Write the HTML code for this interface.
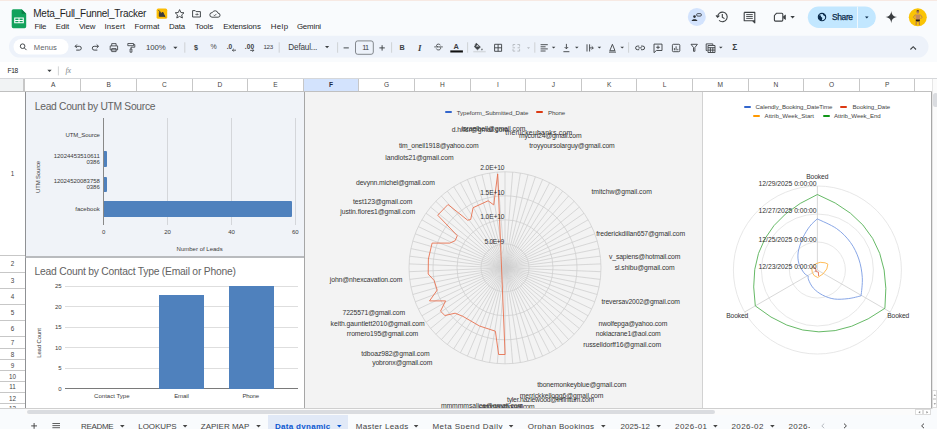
<!DOCTYPE html>
<html><head><meta charset="utf-8"><title>Meta_Full_Funnel_Tracker</title>
<style>
*{box-sizing:border-box;margin:0;padding:0}
html,body{width:937px;height:429px;overflow:hidden;background:#f9fbfd;font-family:"Liberation Sans",sans-serif;color:#1f1f1f}
.abs{position:absolute}
#root{position:relative;width:937px;height:429px;overflow:hidden}
.t{position:absolute;white-space:nowrap;line-height:1}
.menu{font-size:8.2px;color:#1f1f1f;top:22.5px}
.ch{position:absolute;top:79px;height:12.5px;font-size:6.6px;color:#444;text-align:center;line-height:11.6px;border-right:1px solid #c7c7c7;background:#fff}
.rh{position:absolute;left:0;width:25px;font-size:6.3px;color:#444;text-align:center;border-bottom:1px solid #c7c7c7;background:#fff}
.tab{position:absolute;top:420.6px;font-size:8.3px;color:#333;letter-spacing:.35px;white-space:nowrap;line-height:1}
.lb{position:absolute;font-size:7.2px;color:#333;white-space:nowrap;line-height:1;transform:translateY(-50%)}
.ax{position:absolute;font-size:7.4px;color:#333;white-space:nowrap;line-height:1;transform:translateY(-50%)}
.s{position:absolute;font-size:5.6px;color:#444;white-space:nowrap;line-height:1}
svg{position:absolute;left:0;top:0;overflow:visible}
</style></head><body><div id="root">
<!-- top accent line -->
<div class="abs" style="left:0;top:0;width:937px;height:1px;background:#f7e9e3"></div>
<!-- sheets logo -->
<svg width="937" height="62" viewBox="0 0 937 62">
 <path d="M13.300 9.200h8.300l4.600 4.600v12.800a1.600 1.600 0 0 1-1.600 1.600h-11.300a1.600 1.600 0 0 1-1.600-1.600v-15.800a1.600 1.600 0 0 1 1.600-1.600z" fill="#12a25c"/>
 <path d="M21.600 9.200l4.600 4.600h-4.600z" fill="#0b7d45"/>
 <path d="M14.200 17.600h9.600v5.600h-9.600zM15.300 18.600v1.400h3.200v-1.400zM19.500 18.600v1.400h3.200v-1.400zM15.300 20.900v1.300h3.200v-1.300zM19.500 20.900v1.300h3.200v-1.300z" fill="#fff" fill-rule="evenodd"/>
 <!-- yellow badge -->
 <rect x="156.6" y="8.6" width="10.6" height="10.2" rx="1.6" fill="#fbbc04"/>
 <path d="M158.5 10.2l6.8 7M159.4 12.5l2 1.2 1.3-1.6 2 4.2h-5.4z" stroke="#3c3c3c" stroke-width="1" fill="#3c3c3c"/>
 <!-- star -->
 <path d="M179.6 9.6l1.3 2.9 3.1.3-2.3 2.1.7 3.1-2.8-1.6-2.8 1.6.7-3.1-2.3-2.1 3.1-.3z" fill="none" stroke="#3c4043" stroke-width="0.95" stroke-linejoin="round"/>
 <!-- folder move -->
 <path d="M192.6 10.6h2.6l.9 1h4.3v5.4h-7.8z" fill="none" stroke="#3c4043" stroke-width="0.95" stroke-linejoin="round"/>
 <path d="M195.4 14.4h2.6m-.9-1l1 1-1 1" fill="none" stroke="#3c4043" stroke-width="0.8"/>
 <!-- cloud -->
 <path d="M212 17.2a2.3 2.3 0 0 1 .3-4.6 3 3 0 0 1 5.7.6 2 2 0 0 1 .1 4z" fill="none" stroke="#3c4043" stroke-width="0.95" stroke-linejoin="round"/>
 <path d="M213.6 14.8l1 1 1.8-1.9" fill="none" stroke="#3c4043" stroke-width="0.8"/>
 <!-- toolbar pill -->
 <rect x="9" y="35.8" width="919.5" height="21.8" rx="10.9" fill="#edf2fa"/>
 <rect x="13.5" y="39" width="55" height="15.4" rx="7.7" fill="#fff"/>
 <!-- search -->
 <circle cx="22.6" cy="46.2" r="2.3" fill="none" stroke="#3c4043" stroke-width="0.95"/><path d="M24.3 47.9l2.2 2.2" stroke="#3c4043" stroke-width="0.95"/>
 <g transform="translate(0,0.7)">
 <!-- undo / redo -->
 <path d="M75.2 45.6h4.2a1.9 1.9 0 0 1 0 3.8h-3.2M76.9 43.8l-1.8 1.8 1.8 1.8" fill="none" stroke="#3c4043" stroke-width="0.95"/>
 <path d="M98.4 45.6h-4.2a1.9 1.9 0 0 0 0 3.8h3.2M96.7 43.8l1.8 1.8-1.8 1.8" fill="none" stroke="#3c4043" stroke-width="0.95"/>
 <!-- print -->
 <path d="M110.2 45.2h7.4v4h-7.4zM111.7 45.2v-2.300h4.400v2.300M111.700 47.900h4.400v3h-4.400z" fill="none" stroke="#3c4043" stroke-width="0.85"/>
 <!-- paint format -->
 <path d="M127.800 42.800h5.800v2.200h-5.800zM133.600 43.900h1.200v2.600h-3.800v1.800M130.100 48.300h1.800v3.200h-1.800z" fill="none" stroke="#3c4043" stroke-width="0.85"/>
 <path d="M173.300 46l2.100 2.300 2.100-2.300z" fill="#3c4043"/>
 <path d="M184.8 41.6v10.4" stroke="#c7c9cc" stroke-width="0.8"/>
 <!-- decimals arrows -->
 <path d="M236 49.500h-3.600m1.400-1.400l-1.400 1.400 1.400 1.400" fill="none" stroke="#3c4043" stroke-width="0.850"/>
 <path d="M250.200 49.700h3.600m-1.400-1.400l1.400 1.400-1.400 1.400" fill="none" stroke="#3c4043" stroke-width="0.850"/>
 <path d="M279.2 41.6v10.4" stroke="#c7c9cc" stroke-width="0.8"/>
 <path d="M325 45.200l2.100 2.300 2.100-2.300z" fill="#3c4043"/>
 <path d="M337.6 41.6v10.4" stroke="#c7c9cc" stroke-width="0.8"/>
 <path d="M343.6 47.2h5.2" stroke="#3c4043" stroke-width="0.95"/>
 <rect x="355.500" y="40.200" width="17.800" height="13.400" rx="2.200" fill="#edf2fa" stroke="#5f6368" stroke-width="0.750"/>
 <path d="M379.4 47.2h5.4M382.1 44.5v5.4" stroke="#3c4043" stroke-width="0.95"/>
 <path d="M391.6 41.6v10.4" stroke="#c7c9cc" stroke-width="0.8"/>
 <!-- strike -->
 <path d="M434.200 46.200h8.600" stroke="#3c4043" stroke-width="0.800"/>
 <path d="M440.400 44.600c-.400-1.700-3.900-1.600-3.900.200 0 .700.600 1.100 1.400 1.400M436.300 47.900c.500 1.900 4.400 1.700 4.300-.300 0-.500-.300-.900-.700-1.100" fill="none" stroke="#3c4043" stroke-width="0.850"/>
 <!-- text color underline -->
 <rect x="450.300" y="49.700" width="12.600" height="2.100" fill="#111"/>
 <path d="M467.6 41.6v10.4" stroke="#c7c9cc" stroke-width="0.8"/>
 <!-- fill bucket -->
 <path d="M476.400 42.600l4 3.800-2.900 2.700-3.100-3zM475 43.800l1.200-1.200" fill="#3c4043" stroke="#3c4043" stroke-width="0.600" stroke-linejoin="round"/>
 <path d="M475.600 45.800l1.700-1.600 1.800 1.700z" fill="#edf2fa"/>
 <path d="M482 47.600c-.700 1-1 1.500-.100 2.100 1-.600.700-1.100.100-2.100z" fill="#3c4043"/>
 <rect x="473.300" y="50.200" width="12.400" height="1.500" fill="#d5d9de"/>
 <!-- borders -->
 <path d="M494.6 43.6h7v7h-7zM498.1 43.600v7M494.6 47.1h7" fill="none" stroke="#3c4043" stroke-width="0.9"/>
 <!-- merge (disabled) -->
 <path d="M513 43.800h2.200M517.400 43.800h2.200M513 50.400h2.200M517.400 50.400h2.200M512.600 47.100h2.400M517.600 47.100h2.400M513 43.800v2M519.600 43.800v2M513 48.400v2M519.600 48.400v2" stroke="#b6bac0" stroke-width="0.9" fill="none"/>
 <path d="M527 46.600l1.500 1.600 1.500-1.600z" fill="#b6bac0"/>
 <path d="M534.800 41.600v10.400" stroke="#c7c9cc" stroke-width="0.8"/>
 <!-- align -->
 <path d="M540.600 44h7.200M540.600 46.100h5M540.600 48.200h7.200M540.600 50.300h5" stroke="#3c4043" stroke-width="0.9"/>
 <path d="M551.800 46l1.800 1.900 1.800-1.900z" fill="#3c4043"/>
 <!-- valign -->
 <path d="M566.400 43.200v4.800m-1.800-1.700l1.800 1.800 1.800-1.800M563.400 51h6" fill="none" stroke="#3c4043" stroke-width="0.9"/>
 <path d="M575 46l1.800 1.900 1.800-1.900z" fill="#3c4043"/>
 <!-- wrap -->
 <path d="M587 43.600v7.200M589.600 47.200h3.600m-1.500-1.600l1.600 1.600-1.600 1.600M589.600 43.600v7.200" fill="none" stroke="#3c4043" stroke-width="0.9"/>
 <path d="M597.600 46l1.800 1.900 1.800-1.900z" fill="#3c4043"/>
 <!-- rotate -->
 <path d="M609.800 50l2.600-6.400 2.600 6.400zM609 51.400h7" fill="none" stroke="#3c4043" stroke-width="0.9"/>
 <path d="M620.400 46l1.800 1.900 1.800-1.900z" fill="#3c4043"/>
 <path d="M628.600 41.600v10.400" stroke="#c7c9cc" stroke-width="0.8"/>
 <!-- link -->
 <path d="M639.200 45.400h-1.800a1.800 1.800 0 0 0 0 3.600h1.800M641 45.400h1.800a1.800 1.800 0 0 1 0 3.600h-1.800M638.400 47.200h3.400" fill="none" stroke="#3c4043" stroke-width="0.95"/>
 <!-- comment+ -->
 <path d="M654 43.400h8v6.400h-5.600l-2.400 2.200zM658 44.800v3.600M656.200 46.600h3.600" fill="none" stroke="#3c4043" stroke-width="0.9"/>
 <!-- chart -->
 <rect x="672.400" y="43.600" width="7.400" height="7.400" rx="1" fill="none" stroke="#3c4043" stroke-width="0.9"/>
 <path d="M674.400 49.600v-2.200M676.100 49.600v-4M677.800 49.600v-1.400" stroke="#3c4043" stroke-width="0.9"/>
 <!-- filter -->
 <path d="M691 43.600h6.400l-2.500 3.200v3.800h-1.400v-3.800z" fill="none" stroke="#3c4043" stroke-width="0.9"/>
 <!-- table views -->
 <path d="M707.400 49.800h-1.200v-6.600h6.600v1.200" fill="none" stroke="#3c4043" stroke-width="0.9"/>
 <path d="M708 44.800h7v7h-7zM708 47h7M710.400 47v4.800M712.800 47v4.800M708 49.400h7" fill="none" stroke="#3c4043" stroke-width="0.9"/>
 <path d="M719 46l1.800 1.900 1.800-1.900z" fill="#3c4043"/>
 <!-- caret up -->
 <path d="M910.400 48.800l2.800-2.800 2.800 2.800" fill="none" stroke="#3c4043" stroke-width="1.1"/>
 </g>
 <!-- top right icons -->
 <circle cx="696.800" cy="16.900" r="9" fill="#d3e3fd"/>
 <circle cx="694.500" cy="16.600" r="1.300" fill="#2b2f33"/><path d="M691.600 21c0-2.200 5.800-2.200 5.800 0z" fill="#2b2f33"/>
 <path d="M693 14.400v2.400M691.800 15.600h2.400" stroke="#2b2f33" stroke-width="0" />
 <rect x="696.600" y="13.600" width="4.800" height="2.500" rx="1.200" fill="none" stroke="#2b2f33" stroke-width="0.800"/>
 <!-- history -->
 <path d="M717.600 16.900a4.800 4.800 0 1 1 1.500 3.500M716 15.400l1.600 1.800 1.800-1.600" fill="none" stroke="#3c4043" stroke-width="1.100"/>
 <path d="M722.300 13.900v3.200l2.200 1.500" fill="none" stroke="#3c4043" stroke-width="1.100"/>
 <!-- comment -->
 <path d="M744.200 12.400h10.600v8.400h-2.200l2.200 2v-2M744.200 12.400v8.400h8.400" fill="none" stroke="#3c4043" stroke-width="1.100" stroke-linejoin="round"/>
 <path d="M746.200 14.600h6.600M746.200 16.500h6.600M746.200 18.400h6.600" stroke="#3c4043" stroke-width="0.900"/>
 <!-- video -->
 <path d="M776.400 13.300h5.400a1 1 0 0 1 1 1v5.800a1 1 0 0 1-1 1h-6.400a1 1 0 0 1-1-1v-4.600z" fill="none" stroke="#3c4043" stroke-width="1.100" stroke-linejoin="round"/>
 <path d="M783.200 16.200l2.600-1.800v5.600l-2.600-1.800z" fill="#3c4043"/>
 <path d="M790.400 16l2.200 2.400 2.200-2.400z" fill="#3c4043"/>
 <!-- share -->
 <rect x="807.800" y="6.600" width="68" height="21.400" rx="10.700" fill="#c2e7ff"/>
 <path d="M857.500 6.600v21.400" stroke="#f9fbfd" stroke-width="0.800"/>
 <circle cx="822" cy="17.100" r="3.700" fill="none" stroke="#0a2a4a" stroke-width="1.100"/>
 <path d="M819 15.400c1.200-.300 2 .200 2 1.100 0 .800 1.300.600 1.300 1.600 0 .800-.500 1.300-.300 2.400-1.800.300-3.600-1.400-3.600-3.400 0-.700.200-1.200.600-1.700zM823.200 13.800c-.500.700-.300 1.500.600 1.600.800.100 1.200.700 1.300 1.500l.600-.400c-.200-1.300-1.200-2.300-2.500-2.700z" fill="#0a2a4a"/>
 <path d="M865 16.600l1.800 1.900 1.800-1.900z" fill="#0a2a4a"/>
 <!-- gemini spark -->
 <path d="M891.300 11c.5 4 2 5.500 5.800 6.100-3.800.600-5.300 2.100-5.800 6.100-.5-4-2-5.500-5.800-6.100 3.800-.600 5.300-2.100 5.800-6.100z" fill="#3a3d40"/>
 <!-- avatar -->
 <circle cx="917.800" cy="17.300" r="9" fill="#fac405"/>
 <ellipse cx="917.800" cy="12.100" rx="1.400" ry="1.700" fill="#b9805a"/>
 <path d="M916.400 11.200c.2-1.400 2.600-1.400 2.800 0z" fill="#3a2a20"/>
 <path d="M915.300 14.400h5l-.5 5.300h-4z" fill="#c58b60"/>
 <path d="M915.300 14.600l-1.900 2.600 1.700 1.800M920.300 14.600l1.900 2.600-1.700 1.800" fill="none" stroke="#b97f55" stroke-width="0.900"/>
 <path d="M915.700 19.400h4.200l-.2 2.200h-3.800z" fill="#1f1a18"/>
 <path d="M916.300 21.500l-.2 3.600M919.300 21.500l.2 3.600" stroke="#b47a50" stroke-width="1.200"/>
</svg>
<div class="t" style="left:33.3px;top:14.0px;font-size:10px;color:#1f1f1f;letter-spacing:-0.268px;transform:translateY(-50%);">Meta_Full_Funnel_Tracker</div>
<div class="t" style="left:34.6px;top:27.0px;font-size:7.9px;color:#1f1f1f;letter-spacing:-0.308px;transform:translateY(-50%);">File</div>
<div class="t" style="left:55.8px;top:27.0px;font-size:7.9px;color:#1f1f1f;letter-spacing:-0.053px;transform:translateY(-50%);">Edit</div>
<div class="t" style="left:78.9px;top:27.0px;font-size:7.9px;color:#1f1f1f;letter-spacing:-0.145px;transform:translateY(-50%);">View</div>
<div class="t" style="left:104.5px;top:27.0px;font-size:7.9px;color:#1f1f1f;letter-spacing:0.124px;transform:translateY(-50%);">Insert</div>
<div class="t" style="left:134.5px;top:27.0px;font-size:7.9px;color:#1f1f1f;letter-spacing:0.013px;transform:translateY(-50%);">Format</div>
<div class="t" style="left:169.0px;top:27.0px;font-size:7.9px;color:#1f1f1f;letter-spacing:-0.172px;transform:translateY(-50%);">Data</div>
<div class="t" style="left:195.0px;top:27.0px;font-size:7.9px;color:#1f1f1f;letter-spacing:-0.069px;transform:translateY(-50%);">Tools</div>
<div class="t" style="left:223.2px;top:27.0px;font-size:7.9px;color:#1f1f1f;letter-spacing:-0.104px;transform:translateY(-50%);">Extensions</div>
<div class="t" style="left:270.8px;top:27.0px;font-size:7.9px;color:#1f1f1f;letter-spacing:0.338px;transform:translateY(-50%);">Help</div>
<div class="t" style="left:296.9px;top:27.0px;font-size:7.9px;color:#1f1f1f;letter-spacing:-0.154px;transform:translateY(-50%);">Gemini</div>
<div class="t" style="left:33.8px;top:48.0px;font-size:7.6px;color:#5f6368;letter-spacing:0.058px;transform:translateY(-50%);">Menus</div>
<div class="t" style="left:146.0px;top:48.0px;font-size:7.8px;color:#3c4043;letter-spacing:-0.062px;transform:translateY(-50%);">100%</div>
<div class="t" style="left:193.9px;top:48.0px;font-size:7.2px;color:#3c4043;letter-spacing:0.296px;transform:translateY(-50%);font-weight:bold;">$</div>
<div class="t" style="left:210.6px;top:46.0px;font-size:7px;color:#444;letter-spacing:0.176px;transform:translateY(-50%);">%</div>
<div class="t" style="left:226.8px;top:47.0px;font-size:6.6px;color:#3c4043;letter-spacing:-0.152px;transform:translateY(-50%);font-weight:bold;">.0</div>
<div class="t" style="left:244.8px;top:47.0px;font-size:6.6px;color:#3c4043;letter-spacing:0.075px;transform:translateY(-50%);font-weight:bold;">.00</div>
<div class="t" style="left:263.4px;top:47.0px;font-size:6.2px;color:#3c4043;letter-spacing:-0.248px;transform:translateY(-50%);">123</div>
<div class="t" style="left:288.3px;top:48.0px;font-size:8.2px;color:#3c4043;letter-spacing:-0.182px;transform:translateY(-50%);">Defaul...</div>
<div class="t" style="left:362.2px;top:48.0px;font-size:7.4px;color:#3c4043;letter-spacing:-0.841px;transform:translateY(-50%);">11</div>
<div class="t" style="left:399.6px;top:48.0px;font-size:7.2px;color:#3c4043;letter-spacing:-0.200px;transform:translateY(-50%);font-weight:bold;">B</div>
<div class="t" style="left:418px;top:48.300px;font-size:8.800px;color:#3c4043;font-style:italic;font-weight:bold;font-family:'Liberation Serif',serif;transform:translateY(-50%)">I</div>
<div class="t" style="left:453.6px;top:47.0px;font-size:7.4px;color:#3c4043;letter-spacing:0.256px;transform:translateY(-50%);font-weight:bold;">A</div>
<div class="t" style="left:732.3px;top:47.0px;font-size:8.4px;color:#3c4043;letter-spacing:-4.153px;transform:translateY(-50%);font-weight:bold;">&Sigma;</div>
<div class="t" style="left:831.9px;top:17.0px;font-size:8.4px;color:#0a2a4a;letter-spacing:-0.303px;transform:translateY(-50%);-webkit-text-stroke:0.25px #0a2a4a;">Share</div>
<div class="abs" style="left:0;top:62px;width:937px;height:16.8px;background:#fff;border-bottom:1px solid #d5d7da"></div>
<div class="t" style="left:7.6px;top:71.0px;font-size:6.6px;color:#222;letter-spacing:-0.391px;transform:translateY(-50%);">F18</div>
<svg width="937" height="80"><path d="M47.300 69.800l2.200 2.300 2.200-2.300z" fill="#3c4043"/><path d="M58.400 66.400v9" stroke="#c7c9cc" stroke-width="0.8"/></svg>
<div class="t" style="left:65.4px;top:71.4px;font-size:8px;color:#80868b;font-style:italic;font-family:'Liberation Serif',serif;transform:translateY(-50%)">fx</div><div class="abs" style="left:0;top:79px;width:937px;height:330px;background:#fff"></div>
<div class="abs" style="left:0;top:79px;width:25px;height:12.5px;background:#f1f3f4;border-right:2px solid #c7c7c7;border-bottom:1px solid #c7c7c7"></div>
<div class="ch" style="left:25.8px;width:55.6px;">A</div>
<div class="ch" style="left:81.4px;width:55.6px;">B</div>
<div class="ch" style="left:137.0px;width:55.6px;">C</div>
<div class="ch" style="left:192.6px;width:55.6px;">D</div>
<div class="ch" style="left:248.2px;width:55.6px;">E</div>
<div class="ch" style="left:303.8px;width:55.6px;background:#d3e3fd;color:#1f2a44;font-weight:bold;">F</div>
<div class="ch" style="left:359.4px;width:55.6px;">G</div>
<div class="ch" style="left:415.0px;width:55.6px;">H</div>
<div class="ch" style="left:470.6px;width:55.6px;">I</div>
<div class="ch" style="left:526.2px;width:55.6px;">J</div>
<div class="ch" style="left:581.8px;width:55.6px;">K</div>
<div class="ch" style="left:637.4px;width:55.6px;">L</div>
<div class="ch" style="left:693.0px;width:55.6px;">M</div>
<div class="ch" style="left:748.6px;width:55.6px;">N</div>
<div class="ch" style="left:804.2px;width:55.6px;">O</div>
<div class="ch" style="left:859.8px;width:55.6px;">P</div>
<div class="ch" style="left:915.4px;width:16.6px;border-right:none"></div>
<div class="abs" style="left:0;top:91.2px;width:932px;height:1px;background:#c0c0c0"></div>
<div class="rh" style="top:92.0px;height:164.2px;line-height:164.2px">1</div>
<div class="rh" style="top:256.2px;height:16.4px;line-height:16.4px">2</div>
<div class="rh" style="top:272.6px;height:16.2px;line-height:16.2px">3</div>
<div class="rh" style="top:288.8px;height:16.2px;line-height:16.2px">4</div>
<div class="rh" style="top:305.0px;height:16.1px;line-height:16.1px">5</div>
<div class="rh" style="top:321.1px;height:16.1px;line-height:16.1px">6</div>
<div class="rh" style="top:337.2px;height:11.4px;line-height:11.4px">7</div>
<div class="rh" style="top:348.6px;height:11.2px;line-height:11.2px">8</div>
<div class="rh" style="top:359.8px;height:11.2px;line-height:11.2px">9</div>
<div class="rh" style="top:371.0px;height:11.1px;line-height:11.1px">10</div>
<div class="rh" style="top:382.1px;height:10.8px;line-height:10.8px">11</div>
<div class="rh" style="top:392.9px;height:11.1px;line-height:11.1px">12</div>
<div class="rh" style="top:404.0px;height:10.6px;line-height:10.6px">13</div>
<div class="abs" style="left:24.6px;top:92px;width:1px;height:317px;background:#c7c7c7"></div>
<div class="abs" style="left:932px;top:79px;width:5px;height:330px;background:#fbfbfb;border-left:1px solid #e6e6e6"></div>
<div class="abs" style="left:933px;top:93.2px;width:5px;height:13.4px;background:#dadce0;border-radius:2.5px"></div><div class="abs" style="left:25.4px;top:92.4px;width:279.6px;height:164.4px;background:#f0f3f8;border:1px solid #8f9194;border-top:none;border-right:none;border-bottom-color:#b9bbbe"></div>
<div class="t" style="left:34.8px;top:107.0px;font-size:10.3px;color:#626262;letter-spacing:-0.303px;transform:translateY(-50%);">Lead Count by UTM Source</div>
<div class="abs" style="left:167.0px;top:117.6px;width:1px;height:107.2px;background:#d4d6da"></div>
<div class="abs" style="left:230.9px;top:117.6px;width:1px;height:107.2px;background:#d4d6da"></div>
<div class="abs" style="left:294.8px;top:117.6px;width:1px;height:107.2px;background:#d4d6da"></div>
<div class="abs" style="left:103.1px;top:117.6px;width:1px;height:107.2px;background:#888"></div>
<div class="abs" style="left:103.6px;top:151.3px;width:3.0px;height:15.5px;background:#4f81bd;border-radius:0 1px 1px 0"></div>
<div class="abs" style="left:103.6px;top:176.5px;width:3.0px;height:15.9px;background:#4f81bd;border-radius:0 1px 1px 0"></div>
<div class="abs" style="left:103.6px;top:201.2px;width:188.8px;height:16.0px;background:#4f81bd;border-radius:0 1px 1px 0"></div>
<div class="t" style="left:65.4px;top:135.0px;font-size:6px;color:#3a3a3a;letter-spacing:-0.095px;transform:translateY(-50%);">UTM_Source</div>
<div class="t" style="left:53.7px;top:156.0px;font-size:6px;color:#3a3a3a;letter-spacing:-0.012px;transform:translateY(-50%);">12024453510611</div>
<div class="t" style="left:86.4px;top:162.0px;font-size:6px;color:#3a3a3a;letter-spacing:0.013px;transform:translateY(-50%);">0386</div>
<div class="t" style="left:53.7px;top:181.0px;font-size:6px;color:#3a3a3a;letter-spacing:-0.044px;transform:translateY(-50%);">12024520083758</div>
<div class="t" style="left:86.4px;top:187.0px;font-size:6px;color:#3a3a3a;letter-spacing:0.013px;transform:translateY(-50%);">0386</div>
<div class="t" style="left:75.2px;top:209.0px;font-size:6px;color:#3a3a3a;letter-spacing:0.031px;transform:translateY(-50%);">facebook</div>
<div class="t" style="left:102.0px;top:232.0px;font-size:6px;color:#3a3a3a;letter-spacing:-0.137px;transform:translateY(-50%);">0</div>
<div class="t" style="left:164.3px;top:232.0px;font-size:6px;color:#3a3a3a;letter-spacing:-0.137px;transform:translateY(-50%);">20</div>
<div class="t" style="left:228.2px;top:232.0px;font-size:6px;color:#3a3a3a;letter-spacing:-0.137px;transform:translateY(-50%);">40</div>
<div class="t" style="left:292.1px;top:232.0px;font-size:6px;color:#3a3a3a;letter-spacing:-0.137px;transform:translateY(-50%);">60</div>
<div class="t" style="left:176.6px;top:249.0px;font-size:6px;color:#3a3a3a;letter-spacing:0.005px;transform:translateY(-50%);">Number of Leads</div>
<div class="abs" style="left:37.7px;top:176.9px;width:0;height:0;transform:rotate(-90deg)"><div class="t" style="left:-16.0px;top:0.0px;font-size:6px;color:#3a3a3a;letter-spacing:-0.167px;transform:translateY(-50%);">UTM Source</div></div><div class="abs" style="left:25.4px;top:256.8px;width:279.6px;height:152px;background:#fff;border-left:1px solid #8f9194;border-top:1px solid #b9bbbe"></div>
<div class="t" style="left:34.6px;top:272.0px;font-size:10.3px;color:#626262;letter-spacing:-0.219px;transform:translateY(-50%);">Lead Count by Contact Type (Email or Phone)</div>
<div class="abs" style="left:64.7px;top:367.9px;width:233.6px;height:1px;background:#dedede"></div>
<div class="abs" style="left:64.7px;top:347.4px;width:233.6px;height:1px;background:#dedede"></div>
<div class="abs" style="left:64.7px;top:326.9px;width:233.6px;height:1px;background:#dedede"></div>
<div class="abs" style="left:64.7px;top:306.4px;width:233.6px;height:1px;background:#dedede"></div>
<div class="abs" style="left:64.7px;top:285.9px;width:233.6px;height:1px;background:#dedede"></div>
<div class="abs" style="left:64.7px;top:388.4px;width:233.6px;height:1px;background:#7a7a7a"></div>
<div class="t" style="left:58.2px;top:389.0px;font-size:6px;color:#3a3a3a;letter-spacing:-0.137px;transform:translateY(-50%);">0</div>
<div class="t" style="left:58.2px;top:368.0px;font-size:6px;color:#3a3a3a;letter-spacing:-0.137px;transform:translateY(-50%);">5</div>
<div class="t" style="left:55.0px;top:348.0px;font-size:6px;color:#3a3a3a;letter-spacing:-0.137px;transform:translateY(-50%);">10</div>
<div class="t" style="left:55.0px;top:327.0px;font-size:6px;color:#3a3a3a;letter-spacing:-0.137px;transform:translateY(-50%);">15</div>
<div class="t" style="left:55.0px;top:307.0px;font-size:6px;color:#3a3a3a;letter-spacing:-0.137px;transform:translateY(-50%);">20</div>
<div class="t" style="left:55.0px;top:286.0px;font-size:6px;color:#3a3a3a;letter-spacing:-0.137px;transform:translateY(-50%);">25</div>
<div class="abs" style="left:159.4px;top:294.6px;width:45.0px;height:94.3px;background:#4f81bd"></div>
<div class="abs" style="left:228.6px;top:286.4px;width:45.1px;height:102.5px;background:#4f81bd"></div>
<div class="t" style="left:94.1px;top:396.0px;font-size:6px;color:#3a3a3a;letter-spacing:0.013px;transform:translateY(-50%);">Contact Type</div>
<div class="t" style="left:174.2px;top:396.0px;font-size:6px;color:#3a3a3a;letter-spacing:-0.081px;transform:translateY(-50%);">Email</div>
<div class="t" style="left:242.4px;top:396.0px;font-size:6px;color:#3a3a3a;letter-spacing:-0.150px;transform:translateY(-50%);">Phone</div>
<div class="abs" style="left:38.6px;top:342.6px;width:0;height:0;transform:rotate(-90deg)"><div class="t" style="left:-14.8px;top:0.0px;font-size:6px;color:#3a3a3a;letter-spacing:-0.143px;transform:translateY(-50%);">Lead Count</div></div><div class="abs" style="left:304px;top:92.2px;width:398.6px;height:316.4px;background:#f3f3f3;border-left:1.2px solid #a6a6a6;border-right:1.4px solid #d2d2d2"></div>
<svg width="937" height="429"><g fill="none" stroke="#cfcfcf" stroke-width="0.8"><path d="M505.0 267.8L505.0 171.8M505.0 267.8L512.7 172.1M505.0 267.8L520.4 173.0M505.0 267.8L528.0 174.6M505.0 267.8L535.4 176.7M505.0 267.8L542.6 179.5M505.0 267.8L549.6 182.8M505.0 267.8L556.3 186.7M505.0 267.8L562.7 191.1M505.0 267.8L568.7 195.9M505.0 267.8L574.2 201.3M505.0 267.8L579.4 207.1M505.0 267.8L584.0 213.3M505.0 267.8L588.1 219.8M505.0 267.8L591.7 226.6M505.0 267.8L594.8 233.8M505.0 267.8L597.2 241.1M505.0 267.8L599.1 248.6M505.0 267.8L600.3 256.2M505.0 267.8L600.9 263.9M505.0 267.8L600.9 271.7M505.0 267.8L600.3 279.4M505.0 267.8L599.1 287.0M505.0 267.8L597.2 294.5M505.0 267.8L594.8 301.8M505.0 267.8L591.7 309.0M505.0 267.8L588.1 315.8M505.0 267.8L584.0 322.3M505.0 267.8L579.4 328.5M505.0 267.8L574.2 334.3M505.0 267.8L568.7 339.7M505.0 267.8L562.7 344.5M505.0 267.8L556.3 348.9M505.0 267.8L549.6 352.8M505.0 267.8L542.6 356.1M505.0 267.8L535.4 358.9M505.0 267.8L528.0 361.0M505.0 267.8L520.4 362.6M505.0 267.8L512.7 363.5M505.0 267.8L505.0 363.8M505.0 267.8L497.3 363.5M505.0 267.8L489.6 362.6M505.0 267.8L482.0 361.0M505.0 267.8L474.6 358.9M505.0 267.8L467.4 356.1M505.0 267.8L460.4 352.8M505.0 267.8L453.7 348.9M505.0 267.8L447.3 344.5M505.0 267.8L441.3 339.7M505.0 267.8L435.8 334.3M505.0 267.8L430.6 328.5M505.0 267.8L426.0 322.3M505.0 267.8L421.9 315.8M505.0 267.8L418.3 309.0M505.0 267.8L415.2 301.8M505.0 267.8L412.8 294.5M505.0 267.8L410.9 287.0M505.0 267.8L409.7 279.4M505.0 267.8L409.1 271.7M505.0 267.8L409.1 263.9M505.0 267.8L409.7 256.2M505.0 267.8L410.9 248.6M505.0 267.8L412.8 241.1M505.0 267.8L415.2 233.8M505.0 267.8L418.3 226.6M505.0 267.8L421.9 219.8M505.0 267.8L426.0 213.3M505.0 267.8L430.6 207.1M505.0 267.8L435.8 201.3M505.0 267.8L441.3 195.9M505.0 267.8L447.3 191.1M505.0 267.8L453.7 186.7M505.0 267.8L460.4 182.8M505.0 267.8L467.4 179.5M505.0 267.8L474.6 176.7M505.0 267.8L482.0 174.6M505.0 267.8L489.6 173.0M505.0 267.8L497.3 172.1"/><circle cx="505.0" cy="267.8" r="24"/><circle cx="505.0" cy="267.8" r="48"/><circle cx="505.0" cy="267.8" r="72"/><circle cx="505.0" cy="267.8" r="96"/></g>
<polygon points="505.1,354.5 498.6,354.5 495.4,331.2 479.5,326 462.8,316.3 455.1,313.2 444.9,315.5 440.5,311.2 445.6,300.9 429.5,300.9 437.2,290.1 434.1,280.4 428.2,274 428.4,259 432.1,243.1 449.8,243.1 455.1,240.7 457.3,235.7 437.7,215.2 448,204.5 467.6,220.2 470.7,219.5 473.1,207.7 488.1,200.8 493.7,204.9 497.7,173.9" fill="none" stroke="#e8704f" stroke-width="0.9"/></svg>
<div class="abs" style="left:445.4px;top:111.2px;width:6.8px;height:2.3px;background:#3366cc;border-radius:1px"></div>
<div class="t" style="left:456.7px;top:113.0px;font-size:6.1px;color:#444;letter-spacing:-0.037px;transform:translateY(-50%);">Typeform_Submitted_Date</div>
<div class="abs" style="left:536.4px;top:111.2px;width:6.8px;height:2.3px;background:#dc3912;border-radius:1px"></div>
<div class="t" style="left:548.0px;top:113.0px;font-size:6.1px;color:#444;letter-spacing:-0.128px;transform:translateY(-50%);">Phone</div>
<div class="t" style="left:451.8px;top:130.0px;font-size:6.8px;color:#333;letter-spacing:-0.074px;transform:translateY(-50%);">d.hillsr@gmail.com</div>
<div class="t" style="left:461.7px;top:129.0px;font-size:6.8px;color:#333;letter-spacing:-0.056px;transform:translateY(-50%);">israelbell@gmail.com</div>
<div class="t" style="left:505.3px;top:133.0px;font-size:6.8px;color:#333;letter-spacing:0.289px;transform:translateY(-50%);">thenickeubanks.com</div>
<div class="t" style="left:518.9px;top:136.0px;font-size:6.8px;color:#333;letter-spacing:-0.170px;transform:translateY(-50%);">mycon24@gmail.com</div>
<div class="t" style="left:398.9px;top:146.0px;font-size:6.8px;color:#333;letter-spacing:-0.122px;transform:translateY(-50%);">tim_oneil1918@yahoo.com</div>
<div class="t" style="left:529.3px;top:146.0px;font-size:6.8px;color:#333;letter-spacing:-0.106px;transform:translateY(-50%);">troyyoursolarguy@gmail.com</div>
<div class="t" style="left:385.3px;top:158.0px;font-size:6.8px;color:#333;letter-spacing:-0.030px;transform:translateY(-50%);">landlots21@gmail.com</div>
<div class="t" style="left:356.0px;top:183.0px;font-size:6.8px;color:#333;letter-spacing:-0.111px;transform:translateY(-50%);">devynn.michel@gmail.com</div>
<div class="t" style="left:591.5px;top:192.0px;font-size:6.8px;color:#333;letter-spacing:-0.032px;transform:translateY(-50%);">tmitchw@gmail.com</div>
<div class="t" style="left:353.0px;top:202.0px;font-size:6.8px;color:#333;letter-spacing:-0.041px;transform:translateY(-50%);">test123@gmail.com</div>
<div class="t" style="left:340.3px;top:212.0px;font-size:6.8px;color:#333;letter-spacing:-0.053px;transform:translateY(-50%);">justin.flores1@gmail.com</div>
<div class="t" style="left:596.3px;top:234.0px;font-size:6.8px;color:#333;letter-spacing:-0.085px;transform:translateY(-50%);">frederickdillan657@gmail.com</div>
<div class="t" style="left:609.0px;top:257.0px;font-size:6.8px;color:#333;letter-spacing:-0.137px;transform:translateY(-50%);">v_sapiens@hotmail.com</div>
<div class="t" style="left:614.7px;top:268.0px;font-size:6.8px;color:#333;letter-spacing:-0.058px;transform:translateY(-50%);">sl.shibu@gmail.com</div>
<div class="t" style="left:329.8px;top:280.0px;font-size:6.8px;color:#333;letter-spacing:-0.094px;transform:translateY(-50%);">john@nhexcavation.com</div>
<div class="t" style="left:601.5px;top:302.0px;font-size:6.8px;color:#333;letter-spacing:-0.112px;transform:translateY(-50%);">treversav2002@gmail.com</div>
<div class="t" style="left:342.5px;top:313.0px;font-size:6.8px;color:#333;letter-spacing:-0.110px;transform:translateY(-50%);">7225571@gmail.com</div>
<div class="t" style="left:330.6px;top:324.0px;font-size:6.8px;color:#333;letter-spacing:-0.043px;transform:translateY(-50%);">keith.gauntlett2010@gmail.com</div>
<div class="t" style="left:598.5px;top:324.0px;font-size:6.8px;color:#333;letter-spacing:-0.130px;transform:translateY(-50%);">nwolfepga@yahoo.com</div>
<div class="t" style="left:346.8px;top:334.0px;font-size:6.8px;color:#333;letter-spacing:-0.082px;transform:translateY(-50%);">rromero195@gmail.com</div>
<div class="t" style="left:595.8px;top:334.0px;font-size:6.8px;color:#333;letter-spacing:-0.156px;transform:translateY(-50%);">nokiacrane1@aol.com</div>
<div class="t" style="left:583.2px;top:345.0px;font-size:6.8px;color:#333;letter-spacing:-0.029px;transform:translateY(-50%);">russelldorff16@gmail.com</div>
<div class="t" style="left:361.3px;top:354.0px;font-size:6.8px;color:#333;letter-spacing:-0.076px;transform:translateY(-50%);">tdboaz982@gmail.com</div>
<div class="t" style="left:372.2px;top:363.0px;font-size:6.8px;color:#333;letter-spacing:-0.122px;transform:translateY(-50%);">yobronx@gmail.com</div>
<div class="t" style="left:537.2px;top:385.0px;font-size:6.8px;color:#333;letter-spacing:-0.091px;transform:translateY(-50%);">tbonemonkeyblue@gmail.com</div>
<div class="t" style="left:519.7px;top:396.0px;font-size:6.8px;color:#333;letter-spacing:-0.076px;transform:translateY(-50%);">merrickkellogg6@gmail.com</div>
<div class="t" style="left:507.0px;top:400.0px;font-size:6.8px;color:#333;letter-spacing:-0.236px;transform:translateY(-50%);">tyler.hazlewood@infinitum.com</div>
<div class="t" style="left:440.9px;top:406.0px;font-size:6.8px;color:#333;letter-spacing:-0.062px;transform:translateY(-50%);">mmmmmsalice@gmail.com</div>
<div class="t" style="left:479.0px;top:407.0px;font-size:6.8px;color:#333;letter-spacing:-0.624px;transform:translateY(-50%);">cartgman@gmail.com</div>
<div class="t" style="left:480.3px;top:168.0px;font-size:6.7px;color:#333;letter-spacing:-0.136px;transform:translateY(-50%);">2.0E+10</div>
<div class="t" style="left:480.3px;top:193.0px;font-size:6.7px;color:#333;letter-spacing:-0.136px;transform:translateY(-50%);">1.5E+10</div>
<div class="t" style="left:480.3px;top:217.0px;font-size:6.7px;color:#333;letter-spacing:-0.136px;transform:translateY(-50%);">1.0E+10</div>
<div class="t" style="left:484.6px;top:242.0px;font-size:6.7px;color:#333;letter-spacing:-0.370px;transform:translateY(-50%);">5.0E+9</div><div class="abs" style="left:702.6px;top:91.6px;width:229px;height:317px;background:#fff;border:1.2px solid #a8a8a8;border-left:none;border-top:none"></div>
<svg width="937" height="429"><g fill="none" stroke="#e4e4e4" stroke-width="0.9"><circle cx="817.4" cy="270.0" r="28"/><circle cx="817.4" cy="270.0" r="56"/><circle cx="817.4" cy="270.0" r="84"/></g><g stroke="#d4d4d4" stroke-width="0.9"><path d="M817.4 270.0L817.4 186.0"/><path d="M817.4 270.0L890.1 312.0"/><path d="M817.4 270.0L744.7 312.0"/></g><path d="M817.4 194.5Q894.1 225.3 884.9 308.3Q817.7 356.6 755.3 305.9Q743.5 227.3 817.4 194.5Z" fill="none" stroke="#55b155" stroke-width="0.9" stroke-linejoin="round"/><path d="M817.3 218.9C820.5 220.5 831.0 224.7 836.6 228.6C842.2 232.5 846.9 237.5 850.6 242.6C854.3 247.7 856.8 253.2 858.8 259.0C860.8 264.8 861.9 271.5 862.3 277.6C862.7 283.7 861.3 292.8 861.1 295.8C859.0 296.3 852.8 298.1 848.3 298.6C843.8 299.1 838.6 299.6 834.3 299.0C830.0 298.4 826.1 296.9 822.6 295.1C819.1 293.3 815.6 290.6 813.3 288.1C811.0 285.6 809.5 281.9 808.6 279.9C807.8 277.9 808.3 276.6 808.2 276.0C807.5 275.5 805.5 275.0 804.0 272.9C802.5 270.8 799.9 267.1 798.9 263.6C797.9 260.1 797.6 256.3 798.2 252.0C798.9 247.7 800.9 242.3 802.8 238.0C804.7 233.7 807.4 229.5 809.8 226.3C812.2 223.1 816.0 220.1 817.3 218.9Z" fill="none" stroke="#7b9ce3" stroke-width="0.9" stroke-linejoin="round"/><path d="M812.5 266.9L816 263.7L820.2 262.3L825.1 262.8L827.9 264.1L826.8 269L823 273.9L817.7 277.5L814.2 275.6L812.3 272.5L811.8 269Z" fill="none" stroke="#ffb547" stroke-width="0.9" stroke-linejoin="round"/><path d="M813.5 266.9L815.3 268.3L816 270L815.6 271.4L818.4 272.1L818.6 276" fill="none" stroke="#dd5b3d" stroke-width="0.8"/></svg>
<div class="abs" style="left:744.2px;top:105.9px;width:6.8px;height:2.3px;background:#3366cc;border-radius:1px"></div>
<div class="abs" style="left:840.1px;top:105.9px;width:6.8px;height:2.3px;background:#dc3912;border-radius:1px"></div>
<div class="abs" style="left:753.3px;top:114.9px;width:6.8px;height:2.3px;background:#ff9900;border-radius:1px"></div>
<div class="abs" style="left:823.4px;top:114.9px;width:6.8px;height:2.3px;background:#109618;border-radius:1px"></div>
<div class="t" style="left:755.5px;top:107.0px;font-size:6.1px;color:#444;letter-spacing:-0.075px;transform:translateY(-50%);">Calendly_Booking_DateTime</div>
<div class="t" style="left:852.6px;top:107.0px;font-size:6.1px;color:#444;letter-spacing:-0.060px;transform:translateY(-50%);">Booking_Date</div>
<div class="t" style="left:764.6px;top:116.0px;font-size:6.1px;color:#444;letter-spacing:0.007px;transform:translateY(-50%);">Attrib_Week_Start</div>
<div class="t" style="left:834.0px;top:116.0px;font-size:6.1px;color:#444;letter-spacing:-0.044px;transform:translateY(-50%);">Attrib_Week_End</div>
<div class="t" style="left:806.2px;top:177.0px;font-size:6.7px;color:#333;letter-spacing:-0.087px;transform:translateY(-50%);">Booked</div>
<div class="t" style="left:726.3px;top:316.0px;font-size:6.7px;color:#333;letter-spacing:-0.137px;transform:translateY(-50%);">Booked</div>
<div class="t" style="left:887.3px;top:316.0px;font-size:6.7px;color:#333;letter-spacing:-0.137px;transform:translateY(-50%);">Booked</div>
<div class="t" style="left:758.6px;top:184.0px;font-size:6.8px;color:#333;letter-spacing:-0.034px;transform:translateY(-50%);">12/29/2025 0:00:00</div>
<div class="t" style="left:758.6px;top:211.0px;font-size:6.8px;color:#333;letter-spacing:-0.034px;transform:translateY(-50%);">12/27/2025 0:00:00</div>
<div class="t" style="left:758.6px;top:240.0px;font-size:6.8px;color:#333;letter-spacing:-0.034px;transform:translateY(-50%);">12/25/2025 0:00:00</div>
<div class="t" style="left:758.6px;top:267.0px;font-size:6.8px;color:#333;letter-spacing:-0.034px;transform:translateY(-50%);">12/23/2025 0:00:00</div><div class="abs" style="left:0;top:408.5px;width:937px;height:21px;background:#f9fbfd"></div>
<div class="abs" style="left:0;top:408.3px;width:932px;height:1px;background:#cfcfcf"></div>
<div class="abs" style="left:25px;top:409.3px;width:890px;height:5.8px;background:#fbfbfb"></div>
<div class="abs" style="left:27px;top:409.8px;width:688px;height:4.6px;background:#dadce0;border-radius:2.3px"></div>
<div class="abs" style="left:915px;top:409.2px;width:8.2px;height:6px;background:#fff;border:0.8px solid #dcdcdc"></div>
<div class="abs" style="left:923.2px;top:409.2px;width:8.2px;height:6px;background:#fff;border:0.8px solid #dcdcdc"></div>
<div class="abs" style="left:932.4px;top:390.4px;width:4.6px;height:9px;background:#fff;border:0.8px solid #dcdcdc"></div>
<div class="abs" style="left:932.4px;top:399.4px;width:4.6px;height:9px;background:#fff;border:0.8px solid #dcdcdc"></div>
<svg width="937" height="429"><path d="M920.2 411l-1.800 1.300 1.800 1.300zM926.400 411l1.800 1.300-1.800 1.300zM933.600 395.800l1.200-1.600 1.200 1.600zM933.600 403.200l1.200 1.600 1.200-1.600z" fill="#8a8a8a"/></svg>
<div class="abs" style="left:267.6px;top:415.2px;width:80.4px;height:14px;background:#e1e9f7"></div>
<div class="t" style="left:80.9px;top:427.0px;font-size:8px;color:#444;letter-spacing:-0.288px;transform:translateY(-50%);">README</div>
<div class="t" style="left:138.3px;top:427.0px;font-size:8px;color:#444;letter-spacing:-0.054px;transform:translateY(-50%);">LOOKUPS</div>
<div class="t" style="left:200.8px;top:427.0px;font-size:8px;color:#444;letter-spacing:0.005px;transform:translateY(-50%);">ZAPIER MAP</div>
<div class="t" style="left:355.7px;top:427.0px;font-size:8px;color:#444;letter-spacing:0.369px;transform:translateY(-50%);">Master Leads</div>
<div class="t" style="left:432.5px;top:427.0px;font-size:8px;color:#444;letter-spacing:0.453px;transform:translateY(-50%);">Meta Spend Daily</div>
<div class="t" style="left:527.8px;top:427.0px;font-size:8px;color:#444;letter-spacing:0.319px;transform:translateY(-50%);">Orphan Bookings</div>
<div class="t" style="left:620.4px;top:427.0px;font-size:8px;color:#444;letter-spacing:0.048px;transform:translateY(-50%);">2025-12</div>
<div class="t" style="left:675.1px;top:427.0px;font-size:8px;color:#444;letter-spacing:0.434px;transform:translateY(-50%);">2026-01</div>
<div class="t" style="left:731.4px;top:427.0px;font-size:8px;color:#444;letter-spacing:0.448px;transform:translateY(-50%);">2026-02</div>
<div class="t" style="left:274.9px;top:427.0px;font-size:8px;color:#0b57d0;letter-spacing:0.307px;transform:translateY(-50%);font-weight:bold;">Data dynamic</div>
<div class="abs" style="left:788.4px;top:416px;width:21.8px;height:13px;overflow:hidden"><div class="t" style="left:0.0px;top:11.0px;font-size:8px;color:#444;letter-spacing:0.448px;transform:translateY(-50%);">2026-03</div></div>
<svg width="937" height="429"><path d="M120.0 424.9l2.300 2.500 2.300-2.500z" fill="#444"/><path d="M182.8 424.9l2.300 2.500 2.300-2.500z" fill="#444"/><path d="M256.2 424.9l2.300 2.500 2.300-2.500z" fill="#444"/><path d="M413.8 424.9l2.300 2.500 2.300-2.500z" fill="#444"/><path d="M508.8 424.9l2.300 2.500 2.300-2.500z" fill="#444"/><path d="M601.0 424.9l2.300 2.500 2.300-2.500z" fill="#444"/><path d="M656.4 424.9l2.300 2.500 2.300-2.500z" fill="#444"/><path d="M713.1 424.9l2.300 2.500 2.300-2.500z" fill="#444"/><path d="M770.1 424.9l2.300 2.500 2.300-2.500z" fill="#444"/><path d="M337.0 424.9l2.300 2.500 2.300-2.500z" fill="#0b57d0"/><path d="M34.100 423v5.800M31.200 425.900h5.800" stroke="#444" stroke-width="0.95"/><path d="M52.400 423.500h7.600M52.400 425.600h7.600M52.400 427.700h7.600" stroke="#444" stroke-width="0.85"/><path d="M824.200 423.600l-2.400 2.300 2.400 2.300" fill="none" stroke="#b8bcc2" stroke-width="1"/><path d="M844 423.600l2.400 2.300-2.400 2.300" fill="none" stroke="#444" stroke-width="1"/><path d="M924 423.600l-2.400 2.300 2.400 2.300" fill="none" stroke="#444" stroke-width="1"/></svg>
</div></body></html>
